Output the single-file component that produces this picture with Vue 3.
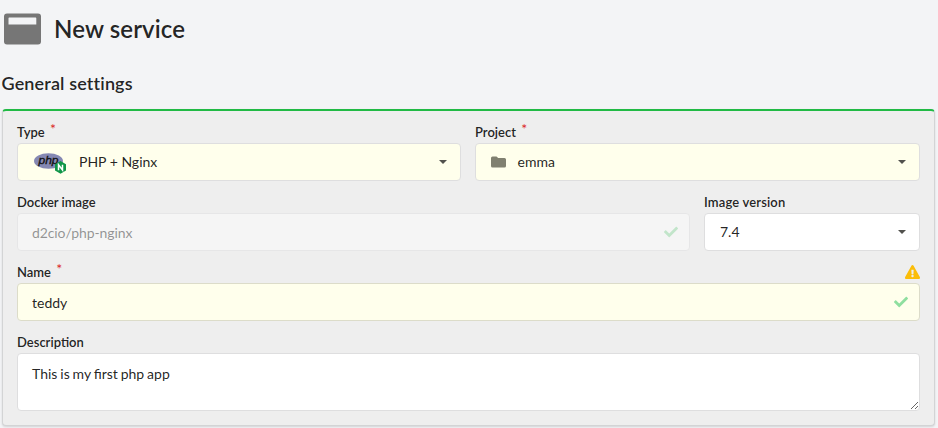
<script setup>
import { ref } from 'vue'

const image = ref('d2cio/php-nginx')
const name = ref('teddy')
const description = ref('This is my first php app')
</script>

<template>
  <main class="page">
    <header class="title">
      <svg class="title-icon" viewBox="0 0 37 32" width="37" height="32">
        <path fill="#767676" fill-rule="evenodd" d="M3 0.5h31a3 3 0 0 1 3 3v25a3 3 0 0 1-3 3H3a3 3 0 0 1-3-3v-25a3 3 0 0 1 3-3zM5.200 4.500a.7.7 0 0 0-.7.7v6.300h27.800V5.200a.7.7 0 0 0-.7-.7z" />
      </svg>
      <h1>New service</h1>
    </header>
    <h2>General settings</h2>

    <form class="segment">
      <div class="row halves">
        <div class="field">
          <label>Type <sup>*</sup></label>
          <div class="control filled">
            <svg class="php" viewBox="0 0 34 24" width="34" height="24">
              <ellipse cx="14.500" cy="10" rx="14.500" ry="7.800" fill="#8588b3" />
              <text class="php-text" x="4.500" y="12.500" textLength="20" lengthAdjust="spacingAndGlyphs">php</text>
              <path d="M26.500 10l5.500 3.200v6.400l-5.500 3.200-5.500-3.200v-6.400z" fill="#109648" />
              <path d="M24.500 19.200v-5.400l4 5.200v-5.200" fill="none" stroke="#fff" stroke-width="1.500" />
            </svg>
            <span class="value">PHP + Nginx</span>
            <i class="caret"></i>
          </div>
        </div>
        <div class="field">
          <label>Project <sup>*</sup></label>
          <div class="control filled">
            <svg class="folder" viewBox="0 0 15 12" width="15" height="12">
              <path fill="#808070" d="M1.500 .5h4L7.200 2h6.300A1.500 1.500 0 0 1 15 3.500v6.500a1.500 1.500 0 0 1-1.500 1.500h-12A1.500 1.500 0 0 1 0 10V2A1.500 1.500 0 0 1 1.500 .5z" />
            </svg>
            <span class="value">emma</span>
            <i class="caret"></i>
          </div>
        </div>
      </div>

      <div class="row image-row">
        <div class="field">
          <label>Docker image</label>
          <div class="control disabled">
            <input v-model="image" class="image-input" disabled />
            <svg class="check" viewBox="0 0 512 512" width="14" height="14"><path fill="#8fdba0" d="M173.900 439.400l-166.400-166.400c-10-10-10-26.200 0-36.200l36.200-36.200c10-10 26.200-10 36.200 0L192 312.700 432.100 72.600c10-10 26.200-10 36.200 0l36.200 36.200c10 10 10 26.200 0 36.200l-294.400 294.400c-10 10-26.200 10-36.200 0z" /></svg>
          </div>
        </div>
        <div class="field">
          <label class="version-label">Image version</label>
          <div class="control">
            <span class="value version">7.4</span>
            <i class="caret"></i>
          </div>
        </div>
      </div>

      <div class="row">
        <div class="field">
          <div class="label-line">
            <label>Name <sup>*</sup></label>
            <svg class="warning" viewBox="0 0 576 512" width="15" height="14" preserveAspectRatio="none"><path fill="#fbbd08" d="M569.500 440c18.500 32-4.700 72-41.600 72H48.100c-36.900 0-60-40.100-41.600-72L246.400 24c18.500-32 64.700-32 83.200 0l239.900 416zM288 354a46 46 0 1 0 0 92 46 46 0 0 0 0-92zm-43.700-165.300l7.400 136c.4 6.400 5.600 11.300 12 11.300h48.500c6.400 0 11.600-5 12-11.300l7.400-136c.4-6.900-5.100-12.700-12-12.700h-63.400c-6.900 0-12.300 5.800-11.900 12.700z" /></svg>
          </div>
          <div class="control filled name">
            <input v-model="name" />
            <svg class="check" viewBox="0 0 512 512" width="14" height="14"><path fill="#8fdf9f" d="M173.900 439.400l-166.400-166.400c-10-10-10-26.200 0-36.200l36.200-36.200c10-10 26.200-10 36.200 0L192 312.700 432.100 72.600c10-10 26.200-10 36.200 0l36.200 36.200c10 10 10 26.200 0 36.200l-294.400 294.400c-10 10-26.200 10-36.200 0z" /></svg>
          </div>
        </div>
      </div>

      <div class="row">
        <div class="field">
          <label>Description</label>
          <textarea v-model="description" spellcheck="false"></textarea>
        </div>
      </div>
    </form>
  </main>
</template>

<style>
body { background: #f3f4f6; overflow: hidden; }
</style>

<style scoped>
* { box-sizing: border-box; }
.page {
  height: 428px;
  padding: 0 3px 0 2px;
  font: 14px/20px Lato, "Liberation Sans", sans-serif;
  color: rgba(0, 0, 0, .87);
}
.title { display: flex; align-items: center; gap: 13px; height: 58px; padding-left: 2px; }
.title-icon { flex: none; }
h1 { margin: 0; font-size: 24px; line-height: 32px; font-weight: 600; letter-spacing: .12px; }
h2 { margin: 13px 0 14px -.5px; font-size: 18px; line-height: 24px; font-weight: 600; letter-spacing: .14px; font-variant-ligatures: none; }
.segment {
  height: 317px;
  padding: 13px 14px;
  background: #eee;
  border: 1px solid #d3d4d5;
  border-top: 2px solid #21ba45;
  border-radius: 4px;
  box-shadow: 0 1px 2px rgba(34, 36, 38, .15);
}
.row { display: grid; gap: 14px; margin-bottom: 13px; }
.halves { grid-template-columns: 444px 1fr; }
.image-row { grid-template-columns: 673px 1fr; }
.field { min-width: 0; }
label { display: block; height: 19px; font-size: 13px; line-height: 17px; font-weight: 600; }
.version-label { letter-spacing: .15px; }
sup { margin-left: 2px; font-size: 14px; line-height: 0; font-weight: 400; color: #db2828; vertical-align: 3px; }
.label-line { display: flex; justify-content: space-between; height: 19px; }
.warning { margin-top: 1px; }
.control {
  display: flex;
  align-items: center;
  height: 38px;
  padding: 0 14px;
  background: #fff;
  border: 1px solid #dededf;
  border-radius: 4px;
}
.filled { background: #ffffec; }
.name { border-color: #dcdcc9; }
.disabled { opacity: .45; }
.value { flex: 1; }
.version { padding-left: 1px; }
.php { flex: none; margin: 2px 11px 0 2px; }
.php-text { font: italic 11px "Liberation Sans", sans-serif; fill: #111; stroke: #111; stroke-width: .3px; }
.folder { flex: none; margin: 0 11.500px 0 1px; }
.caret {
  width: 8px;
  margin-right: -1px;
  border: 4px solid transparent;
  border-top-color: #51514d;
  border-bottom: 0;
}
input, textarea { font: inherit; color: inherit; outline: none; }
input { flex: 1; min-width: 0; padding: 2px 0 0; border: 0; background: transparent; }
.image-input { letter-spacing: -.1px; }
.check { margin-right: -3px; }
textarea {
  display: block;
  width: 100%;
  height: 58px;
  padding: 10px 14px;
  background: #fff;
  border: 1px solid #dededf;
  border-radius: 4px;
  word-spacing: -.7px;
  resize: vertical;
}
</style>
